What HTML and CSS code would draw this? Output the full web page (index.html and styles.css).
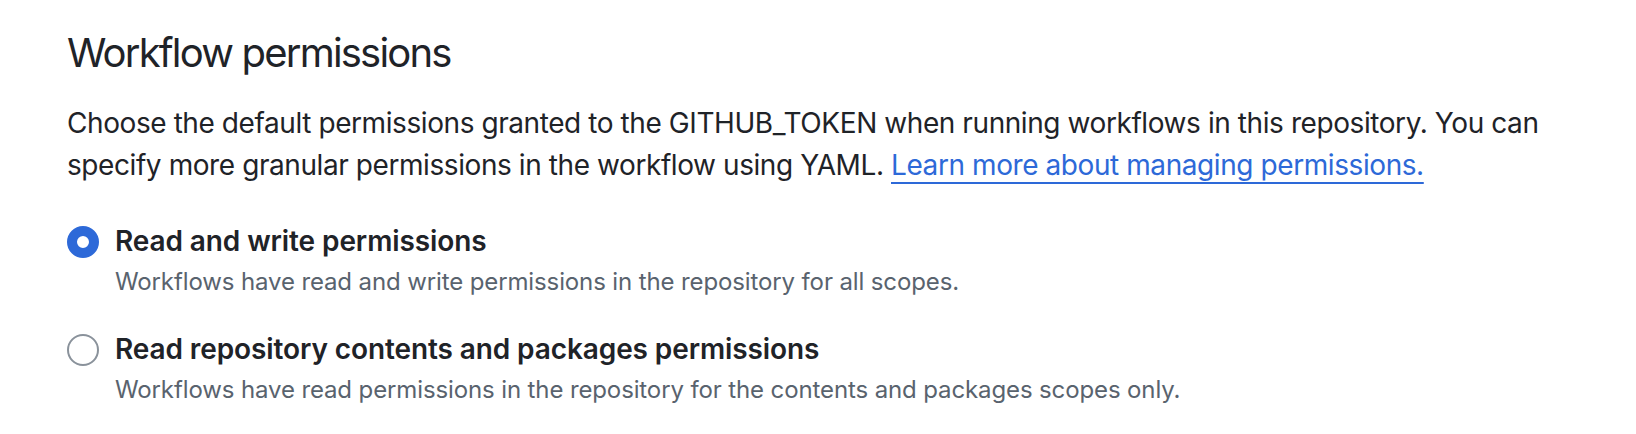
FILE: index.html
```html
<!DOCTYPE html>
<html lang="en">

<head>
  <meta charset="UTF-8">
  <meta name="viewport" content="width=device-width, initial-scale=1.0">
  <title>Workflow permissions</title>
  <link rel="stylesheet" href="styles.css">
</head>

<body>
  <div class="container">
    <h2 class="subhead">Workflow permissions</h2>
    <p class="note">
      Choose the default permissions granted to the GITHUB_TOKEN when running workflows in this repository. You can
      specify more granular permissions in the workflow using YAML.
      <a href="#" class="link">Learn more about managing permissions.</a>
    </p>

    <div class="options">
      <label class="option">
        <input type="radio" name="permissions" value="write" checked>
        <span class="option-body">
          <span class="option-title">Read and write permissions</span>
          <span class="option-desc">Workflows have read and write permissions in the repository for all scopes.</span>
        </span>
      </label>

      <label class="option">
        <input type="radio" name="permissions" value="read">
        <span class="option-body">
          <span class="option-title">Read repository contents and packages permissions</span>
          <span class="option-desc">Workflows have read permissions in the repository for the contents and packages scopes only.</span>
        </span>
      </label>
    </div>
  </div>
</body>

</html>
```

FILE: styles.css
```css
:root {
  --fg: #1f2328;
  --muted: #59636e;
  --accent: #2d69d8;
  --border: #8a929b;
  --bg: #ffffff;
}

* {
  margin: 0;
  padding: 0;
  box-sizing: border-box;
  font-family: 'Inter', 'Noto Sans', sans-serif;
}

body {
  background-color: var(--bg);
  color: var(--fg);
}

.container {
  padding: 23px 67px 0 67px;
}

.subhead {
  font-size: 40px;
  font-weight: 400;
  line-height: 60px;
  letter-spacing: -1.8px;
}

.note {
  margin-top: 19px;
  font-size: 28px;
  line-height: 42px;
  letter-spacing: -0.42px;
}

.link {
  color: var(--accent);
  text-decoration: underline;
  text-decoration-thickness: 2px;
  text-underline-offset: 7px;
}

.options {
  display: flex;
  flex-direction: column;
  gap: 28px;
  margin-top: 34px;
}

.option {
  display: flex;
  align-items: flex-start;
  gap: 16px;
  cursor: pointer;
}

.option input {
  appearance: none;
  -webkit-appearance: none;
  flex: none;
  width: 32px;
  height: 32px;
  margin-top: 6px;
  border-radius: 50%;
  border: 2px solid var(--border);
  background-color: var(--bg);
}

.option input:checked {
  border: 10px solid var(--accent);
}

.option-body {
  display: flex;
  flex-direction: column;
}

.option-title {
  font-size: 28px;
  font-weight: 600;
  line-height: 42px;
  letter-spacing: -0.1px;
}

.option-desc {
  margin-top: 2px;
  font-size: 24px;
  line-height: 36px;
  letter-spacing: -0.12px;
  color: var(--muted);
}
```
